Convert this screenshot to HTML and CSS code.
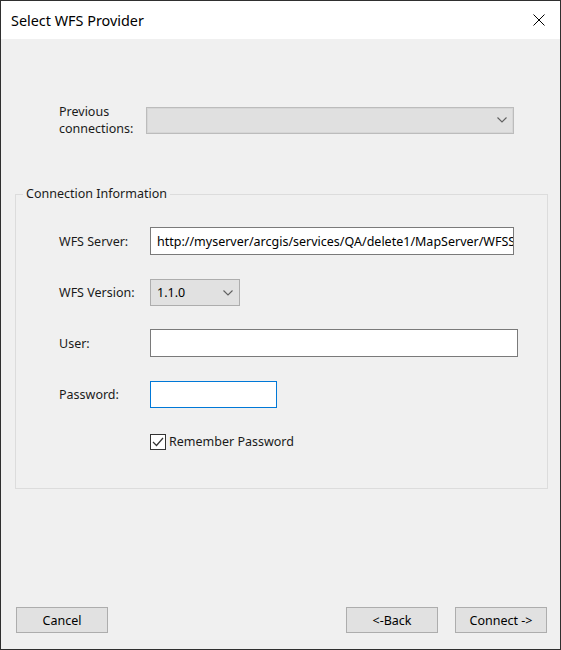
FILE: index.html
```html
<!DOCTYPE html>
<html>
<head>
<meta charset="utf-8">
<link rel="stylesheet" href="styles.css">
</head>
<body>
<div class="window">
  <div class="titlebar">
    <span class="title">Select WFS Provider</span>
    <svg class="close" width="12" height="12" viewBox="0 0 12 12"><path d="M0.5 0.5 L11.5 11.5 M11.5 0.5 L0.5 11.5" stroke="#000" stroke-width="1" fill="none"/></svg>
  </div>
  <div class="content">
    <div class="prev-row">
      <div class="prev-label">Previous<br>connections:</div>
      <div class="combo combo-disabled">
        <svg class="chev" width="10" height="6" viewBox="0 0 10 6"><path d="M0.5 0.5 L5 5 L9.5 0.5" stroke="#606060" stroke-width="1.1" fill="none"/></svg>
      </div>
    </div>
    <fieldset class="group">
      <legend>Connection Information</legend>
      <div class="group-body">
        <div class="row row-server">
          <label class="lbl">WFS Server:</label>
          <div class="field field-server"><span class="url">http://myserver/arcgis/services/QA/delete1/MapServer/WFSServer</span></div>
        </div>
        <div class="row row-version">
          <label class="lbl">WFS Version:</label>
          <div class="combo combo-version"><span class="ver">1.1.0</span>
            <svg class="chev" width="10" height="6" viewBox="0 0 10 6"><path d="M0.5 0.5 L5 5 L9.5 0.5" stroke="#606060" stroke-width="1.1" fill="none"/></svg>
          </div>
        </div>
        <div class="row row-user">
          <label class="lbl">User:</label>
          <div class="field field-user"></div>
        </div>
        <div class="row row-pass">
          <label class="lbl">Password:</label>
          <div class="field field-pass"></div>
        </div>
        <div class="row row-check">
          <span class="lbl"></span>
          <div class="check">
            <span class="box"><svg width="14" height="14" viewBox="0 0 14 14"><path d="M2 7 L5.5 10.5 L12 3" stroke="#333" stroke-width="1.2" fill="none"/></svg></span>
            <span class="check-text">Remember Password</span>
          </div>
        </div>
      </div>
    </fieldset>
  </div>
  <div class="footer">
    <button class="btn">Cancel</button>
    <button class="btn btn-back">&lt;-Back</button>
    <button class="btn btn-connect">Connect -&gt;</button>
  </div>
</div>
</body>
</html>
```
FILE: styles.css
```css
* { box-sizing: border-box; }
html, body { margin: 0; padding: 0; }
body {
  font-family: "Noto Sans", "Open Sans", sans-serif;
  font-size: 12.5px;
  color: #1a1a1a;
  background: #f0f0f0;
}
.window {
  width: 561px;
  height: 650px;
  border: 1px solid #2f2f2f;
  background: #f0f0f0;
  display: flex;
  flex-direction: column;
}
.titlebar {
  height: 38px;
  background: #fff;
  display: flex;
  align-items: center;
  justify-content: space-between;
  padding: 0 15px 0 10px;
  flex: none;
}
.title {
  font-size: 14.4px;
  color: #000;
}
.close { display: block; }
.content {
  flex: 1;
  padding: 64px 12px 0 14px;
}
.prev-row {
  display: flex;
  align-items: center;
  padding-left: 44px;
}
.prev-label {
  width: 87px;
  line-height: 17px;
}
.combo {
  display: flex;
  align-items: center;
  justify-content: space-between;
}
.combo-disabled {
  width: 368px;
  height: 27px;
  background: #e0e0e0;
  border: 1px solid #bcbcbc;
  box-shadow: inset 0 0 0 1px #d6d6d6;
  justify-content: flex-end;
  padding-right: 6px;
}
.group {
  margin: 49px 0 0 0;
  border: 1px solid #dcdcdc;
  padding: 0;
}
.group legend {
  margin-left: 7px;
  padding: 0 3px;
  line-height: 16px;
}
.group-body {
  padding: 25px 0 38px 43px;
}
.row {
  display: flex;
  align-items: center;
}
.lbl {
  width: 91px;
  flex: none;
}
.row-version { margin-top: 24px; }
.row-user { margin-top: 23px; }
.row-pass { margin-top: 24px; }
.row-check { margin-top: 25px; }
.field {
  background: #fff;
  border: 1px solid #7a7a7a;
  height: 28px;
  overflow: hidden;
  white-space: nowrap;
  display: flex;
  align-items: center;
}
.field-server { width: 364px; padding-left: 6px; }
.field-user { width: 368px; }
.field-pass { width: 127px; height: 27px; border-color: #0078d7; }
.url { color: #000; }
.combo-version {
  width: 90px;
  height: 27px;
  background: #e1e1e1;
  border: 1px solid #adadad;
  padding: 0 6px 0 6px;
}
.ver { color: #000; }
.check {
  display: flex;
  align-items: center;
  gap: 3px;
}
.box {
  width: 16px;
  height: 16px;
  border: 1px solid #333;
  background: #fff;
  display: flex;
  align-items: center;
  justify-content: center;
}
.box svg { display: block; }
.footer {
  flex: none;
  display: flex;
  padding: 0 13px 16px 15px;
}
.btn {
  width: 92px;
  height: 26px;
  background: #e1e1e1;
  border: 1px solid #adadad;
  font-family: "Noto Sans", "Open Sans", sans-serif;
  font-size: 12.5px;
  color: #000;
  padding: 0;
}
.btn-back { margin-left: auto; }
.btn-connect { margin-left: 17px; }
```
